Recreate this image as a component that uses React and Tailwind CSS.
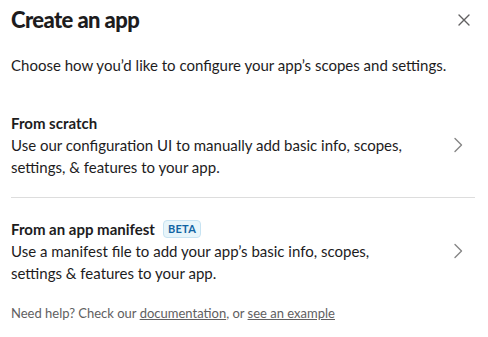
import React from 'react';

const Chevron = () => (
  <svg width="10" height="16" viewBox="0 0 10 16" fill="none" className="shrink-0">
    <path d="M2 1.5l6.5 6.5-6.5 6.5" stroke="#868686" strokeWidth="1.4" strokeLinecap="round" strokeLinejoin="round" />
  </svg>
);

const Option = ({ title, badge, lines }) => (
  <div className="flex items-center justify-between pr-[12px] cursor-pointer">
    <div>
      <div className="flex items-center gap-[8px] text-[15px] leading-[22px] font-bold text-[#1d1c1d]">
        <span>{title}</span>
        {badge && (
          <span className="text-[11px] leading-[14px] font-bold text-[#1264a3] bg-[#e8f5fa] border border-[#c7e3f2] rounded-[4px] px-[4px] py-[1px] tracking-[0.3px]">
            {badge}
          </span>
        )}
      </div>
      <div className="text-[15px] leading-[22px] text-[#1d1c1d]">
        {lines.map((l, i) => (
          <div key={i}>{l}</div>
        ))}
      </div>
    </div>
    <Chevron />
  </div>
);

export default function App() {
  return (
    <div className="w-[488px] h-[337px] bg-white font-['Lato','Liberation_Sans',sans-serif] pl-[11px] pr-[13px] pt-[6px]">
      <div className="flex items-center justify-between">
        <h1 className="text-[22px] leading-[28px] font-black text-[#1d1c1d] tracking-[-0.6px]">Create an app</h1>
        <button className="mr-[4px] text-[#616061]">
          <svg width="14" height="14" viewBox="0 0 14 14">
            <path d="M2 2l10 10M12 2L2 12" stroke="#616061" strokeWidth="1.4" strokeLinecap="round" />
          </svg>
        </button>
      </div>
      <p className="mt-[20px] text-[15px] leading-[22px] text-[#1d1c1d]">
        Choose how you’d like to configure your app’s scopes and settings.
      </p>
      <div className="mt-[36px]">
        <Option
          title="From scratch"
          lines={[
            'Use our configuration UI to manually add basic info, scopes,',
            'settings, & features to your app.',
          ]}
        />
      </div>
      <div className="mt-[19px] border-t border-[#dddddd]" />
      <div className="mt-[20px]">
        <Option
          title="From an app manifest"
          badge="BETA"
          lines={[
            'Use a manifest file to add your app’s basic info, scopes,',
            'settings & features to your app.',
          ]}
        />
      </div>
      <p className="mt-[20px] text-[13px] leading-[18px] text-[#616061]">
        Need help? Check our <a className="underline">documentation</a>, or{' '}
        <a className="underline">see an example</a>
      </p>
    </div>
  );
}
